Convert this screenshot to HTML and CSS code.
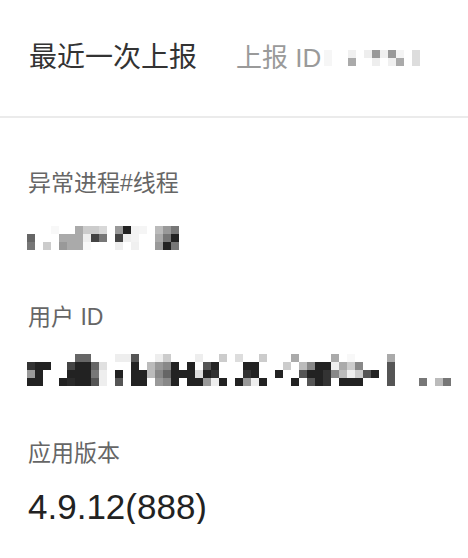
FILE: index.html
```html
<!DOCTYPE html>
<html lang="zh-CN">
<head>
<meta charset="utf-8">
<title>最近一次上报</title>
<link rel="stylesheet" href="styles.css">
</head>
<body>
<header class="header">
  <div class="title">最近一次上报</div>
  <div class="report">
    <span>上报 ID</span>
    <svg class="mosaic mosaic-id" width="96" height="16" viewBox="0 0 96 16">
      <rect x="0" y="0" fill="#f6f6f6"/><rect x="0" y="8" fill="#f6f6f6"/>
      <rect x="24" y="0" fill="#f0f0f0"/><rect x="24" y="8" fill="#aaaaaa"/>
      <rect x="40" y="0" fill="#eeeeee"/>
      <rect x="48" y="0" fill="#999999"/><rect x="48" y="8" fill="#eeeeee"/>
      <rect x="56" y="0" fill="#f0f0f0"/>
      <rect x="64" y="0" fill="#999999"/><rect x="64" y="8" fill="#f0f0f0"/>
      <rect x="72" y="0" fill="#f4f4f4"/><rect x="72" y="8" fill="#aaaaaa"/>
      <rect x="88" y="0" fill="#dddddd"/><rect x="88" y="8" fill="#dddddd"/>
    </svg>
  </div>
</header>
<main class="fields">
  <div class="label label-first">异常进程#线程</div>
  <svg class="mosaic mosaic-process" width="152" height="24" viewBox="0 0 152 24">
    <rect x="24" y="0" fill="#f8f8f8"/><rect x="48" y="0" fill="#aaaaaa"/><rect x="56" y="0" fill="#cccccc"/><rect x="64" y="0" fill="#cccccc"/><rect x="72" y="0" fill="#d8d8d8"/><rect x="88" y="0" fill="#999999"/><rect x="96" y="0" fill="#222222"/><rect x="104" y="0" fill="#f3f3f3"/><rect x="112" y="0" fill="#f5f5f5"/><rect x="128" y="0" fill="#bbbbbb"/><rect x="136" y="0" fill="#999999"/><rect x="144" y="0" fill="#777777"/>
    <rect x="0" y="8" fill="#666666"/><rect x="32" y="8" fill="#aaaaaa"/><rect x="40" y="8" fill="#aaaaaa"/><rect x="48" y="8" fill="#aaaaaa"/><rect x="56" y="8" fill="#eeeeee"/><rect x="64" y="8" fill="#444444"/><rect x="72" y="8" fill="#777777"/><rect x="88" y="8" fill="#444444"/><rect x="96" y="8" fill="#eeeeee"/><rect x="104" y="8" fill="#f3f3f3"/><rect x="128" y="8" fill="#aaaaaa"/><rect x="136" y="8" fill="#777777"/><rect x="144" y="8" fill="#222222"/>
    <rect x="0" y="16" fill="#777777"/><rect x="16" y="16" fill="#cccccc"/><rect x="32" y="16" fill="#999999"/><rect x="40" y="16" fill="#aaaaaa"/><rect x="48" y="16" fill="#aaaaaa"/><rect x="56" y="16" fill="#f8f8f8"/><rect x="88" y="16" fill="#eeeeee"/><rect x="104" y="16" fill="#f0f0f0"/><rect x="128" y="16" fill="#999999"/><rect x="136" y="16" fill="#222222"/><rect x="144" y="16" fill="#777777"/>
  </svg>

  <div class="label label-next">用户 ID</div>
  <svg class="mosaic mosaic-user" width="424" height="32" viewBox="0 0 424 32">
    <rect x="48" y="0" fill="#666666"/><rect x="56" y="0" fill="#666666"/><rect x="88" y="0" fill="#eeeeee"/><rect x="96" y="0" fill="#eeeeee"/><rect x="104" y="0" fill="#555555"/><rect x="128" y="0" fill="#eeeeee"/><rect x="136" y="0" fill="#cccccc"/><rect x="168" y="0" fill="#eeeeee"/><rect x="192" y="0" fill="#cccccc"/><rect x="208" y="0" fill="#dddddd"/><rect x="232" y="0" fill="#cccccc"/><rect x="264" y="0" fill="#aaaaaa"/><rect x="304" y="0" fill="#aaaaaa"/><rect x="320" y="0" fill="#f8f8f8"/><rect x="360" y="0" fill="#aaaaaa"/>
    <rect x="0" y="8" fill="#333333"/><rect x="8" y="8" fill="#222222"/><rect x="16" y="8" fill="#222222"/><rect x="40" y="8" fill="#444444"/><rect x="48" y="8" fill="#222222"/><rect x="56" y="8" fill="#222222"/><rect x="64" y="8" fill="#666666"/><rect x="72" y="8" fill="#e0e0e0"/><rect x="104" y="8" fill="#222222"/><rect x="120" y="8" fill="#bbbbbb"/><rect x="128" y="8" fill="#999999"/><rect x="136" y="8" fill="#888888"/><rect x="144" y="8" fill="#222222"/><rect x="160" y="8" fill="#222222"/><rect x="176" y="8" fill="#555555"/><rect x="184" y="8" fill="#222222"/><rect x="216" y="8" fill="#222222"/><rect x="224" y="8" fill="#222222"/><rect x="256" y="8" fill="#cccccc"/><rect x="272" y="8" fill="#bbbbbb"/><rect x="280" y="8" fill="#888888"/><rect x="288" y="8" fill="#222222"/><rect x="296" y="8" fill="#222222"/><rect x="304" y="8" fill="#eeeeee"/><rect x="312" y="8" fill="#aaaaaa"/><rect x="320" y="8" fill="#cccccc"/><rect x="328" y="8" fill="#888888"/><rect x="360" y="8" fill="#555555"/>
    <rect x="0" y="16" fill="#999999"/><rect x="8" y="16" fill="#222222"/><rect x="40" y="16" fill="#222222"/><rect x="48" y="16" fill="#222222"/><rect x="56" y="16" fill="#222222"/><rect x="64" y="16" fill="#777777"/><rect x="72" y="16" fill="#eeeeee"/><rect x="88" y="16" fill="#222222"/><rect x="104" y="16" fill="#222222"/><rect x="112" y="16" fill="#222222"/><rect x="120" y="16" fill="#bbbbbb"/><rect x="128" y="16" fill="#888888"/><rect x="136" y="16" fill="#666666"/><rect x="144" y="16" fill="#222222"/><rect x="152" y="16" fill="#222222"/><rect x="160" y="16" fill="#222222"/><rect x="168" y="16" fill="#dddddd"/><rect x="176" y="16" fill="#222222"/><rect x="184" y="16" fill="#333333"/><rect x="216" y="16" fill="#333333"/><rect x="224" y="16" fill="#222222"/><rect x="248" y="16" fill="#222222"/><rect x="272" y="16" fill="#555555"/><rect x="280" y="16" fill="#222222"/><rect x="288" y="16" fill="#222222"/><rect x="296" y="16" fill="#333333"/><rect x="304" y="16" fill="#888888"/><rect x="312" y="16" fill="#bbbbbb"/><rect x="320" y="16" fill="#eeeeee"/><rect x="328" y="16" fill="#cccccc"/><rect x="336" y="16" fill="#555555"/><rect x="344" y="16" fill="#222222"/><rect x="360" y="16" fill="#555555"/>
    <rect x="0" y="24" fill="#222222"/><rect x="8" y="24" fill="#222222"/><rect x="32" y="24" fill="#222222"/><rect x="40" y="24" fill="#2a2a2a"/><rect x="48" y="24" fill="#222222"/><rect x="56" y="24" fill="#222222"/><rect x="64" y="24" fill="#555555"/><rect x="72" y="24" fill="#eeeeee"/><rect x="88" y="24" fill="#555555"/><rect x="104" y="24" fill="#222222"/><rect x="112" y="24" fill="#222222"/><rect x="128" y="24" fill="#999999"/><rect x="136" y="24" fill="#888888"/><rect x="144" y="24" fill="#222222"/><rect x="160" y="24" fill="#222222"/><rect x="168" y="24" fill="#222222"/><rect x="176" y="24" fill="#999999"/><rect x="184" y="24" fill="#eeeeee"/><rect x="192" y="24" fill="#222222"/><rect x="208" y="24" fill="#222222"/><rect x="216" y="24" fill="#999999"/><rect x="224" y="24" fill="#eeeeee"/><rect x="232" y="24" fill="#222222"/><rect x="264" y="24" fill="#222222"/><rect x="280" y="24" fill="#555555"/><rect x="288" y="24" fill="#222222"/><rect x="296" y="24" fill="#333333"/><rect x="312" y="24" fill="#222222"/><rect x="320" y="24" fill="#222222"/><rect x="328" y="24" fill="#222222"/><rect x="360" y="24" fill="#555555"/><rect x="392" y="24" fill="#777777"/><rect x="408" y="24" fill="#bbbbbb"/><rect x="416" y="24" fill="#777777"/>
  </svg>

  <div class="label label-next">应用版本</div>
  <div class="value">4.9.12(888)</div>
</main>
</body>
</html>
```

FILE: styles.css
```css
html, body {
  margin: 0;
  padding: 0;
  background: #ffffff;
}

body {
  font-family: "Liberation Sans", "Noto Sans CJK SC", sans-serif;
  -webkit-font-smoothing: antialiased;
}

.header {
  height: 116px;
  border-bottom: 2px solid #ebebeb;
  display: flex;
  align-items: center;
  padding-left: 29px;
}

.title {
  font-size: 28px;
  line-height: 28px;
  color: #333333;
}

.report {
  margin-left: 39px;
  display: flex;
  align-items: center;
  font-size: 26px;
  line-height: 26px;
  color: #9a9a9a;
}

.mosaic {
  display: block;
  shape-rendering: crispEdges;
}

.mosaic rect {
  width: 8px;
  height: 8px;
}

.mosaic-id {
  margin-left: 3px;
}

.fields {
  display: flex;
  flex-direction: column;
  align-items: flex-start;
  padding: 0 28px;
}

.label {
  font-size: 23px;
  line-height: 23px;
  color: #666666;
}

.label-first {
  margin-top: 54px;
}

.label-next {
  margin-top: 56px;
}

.mosaic-process {
  margin-top: 31px;
  margin-left: -1px;
}

.mosaic-user {
  margin-top: 25px;
  margin-left: -1px;
}

.value {
  margin-top: 24px;
  font-size: 35px;
  line-height: 35px;
  color: #222222;
}
```
